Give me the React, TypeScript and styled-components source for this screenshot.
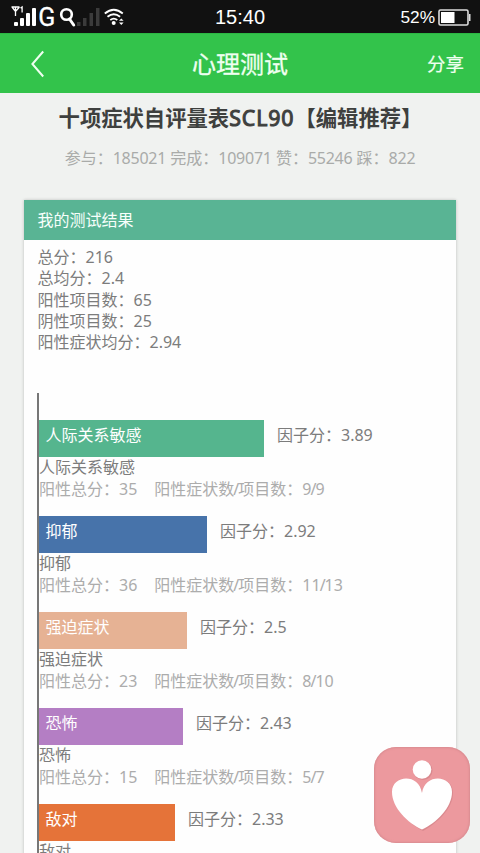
import React from "react";
import styled, { createGlobalStyle } from "styled-components";

const GlobalStyle = createGlobalStyle`
  * { box-sizing: border-box; }
  body {
    margin: 0;
    background: #f0f2f0;
    font-family: "Noto Sans", "Noto Sans CJK SC", sans-serif;
    font-size: 16px;
  }
`;

const Screen = styled.div`
  position: relative;
  display: flex;
  flex-direction: column;
  width: 480px;
  height: 853px;
  overflow: hidden;
  background: #f0f2f0;
`;

const StatusBar = styled.header`
  display: grid;
  grid-template-columns: 1fr auto 1fr;
  align-items: center;
  flex: none;
  height: 33px;
  background: #111;
  color: #fff;
`;

const Signals = styled.svg`
  display: block;
  width: 130px;
  height: 33px;
`;

const Clock = styled.time`
  padding-top: 1px;
  font: 20px/32px "Liberation Sans", Arial, sans-serif;
`;

const Power = styled.div`
  display: flex;
  align-items: center;
  justify-content: flex-end;
  gap: 3px;
  padding: 1px 9px 0 0;
  font: 17.3px/32px "Liberation Sans", Arial, sans-serif;
`;

const NavBar = styled.nav`
  display: grid;
  grid-template-columns: 1fr auto 1fr;
  align-items: center;
  flex: none;
  height: 60px;
  padding: 0 16px 0 30px;
  border-top: 1px solid #2bb743;
  background: #33c34b;
  color: #effff0;
`;

const BackButton = styled.button`
  width: 16px;
  height: 28px;
  padding: 0;
  border: 0;
  background: none;
  color: inherit;
`;

const NavTitle = styled.h1`
  margin: 0 0 0 -14px;
  font-size: 24px;
  font-weight: 400;
  line-height: 36px;
  -webkit-text-stroke: 0.3px currentColor;
`;

const ShareButton = styled.button`
  justify-self: end;
  padding: 0;
  border: 0;
  background: none;
  color: inherit;
  font: inherit;
  font-size: 18.5px;
  line-height: 28px;
  -webkit-text-stroke: 0.2px currentColor;
`;

const Intro = styled.section`
  flex: none;
  height: 107px;
  padding-top: 9px;
  text-align: center;
  white-space: nowrap;
`;

const TestTitle = styled.h2`
  margin: 0;
  padding-left: 1px;
  color: #3e403e;
  font-size: 21.33px;
  font-weight: 700;
  line-height: 32px;
`;

const Latin = styled.span`
  font-weight: 400;
  letter-spacing: 0.9px;
  -webkit-text-stroke: 1px currentColor;
`;

const Counts = styled.p`
  margin: 12px 0 0;
  color: #a9aba9;
  line-height: 24px;
`;

const Digits = styled.span`
  letter-spacing: -0.25px;
`;

const Card = styled.main`
  flex: none;
  width: 432px;
  height: 700px;
  margin: 0 24px;
  background: #fefefe;
  box-shadow: 0 0 3px rgba(0, 0, 0, 0.22);
`;

const CardHeader = styled.h3`
  height: 40px;
  margin: 0;
  padding-left: 13.5px;
  background: #59b494;
  color: #f7fffb;
  font-size: 16px;
  font-weight: 400;
  line-height: 40px;
`;

const Summary = styled.div`
  height: 153px;
  padding: 7px 13.5px;
  color: #7c7c7c;
  line-height: 21.33px;
`;

const Chart = styled.section`
  margin-left: 13px;
  padding-top: 27px;
  border-left: 2px solid #777;
`;

const Factor = styled.article`
  height: 96px;
  color: #7c7c7c;
  line-height: 21.33px;
  white-space: nowrap;
`;

const BarLine = styled.div`
  display: flex;
  gap: 13px;
  height: 37px;
  line-height: 31px;
`;

const Bar = styled.div<{ $width: number; $color: string }>`
  flex: none;
  width: ${(p) => p.$width}px;
  padding-left: 6.5px;
  background: ${(p) => p.$color};
  color: #fff;
`;

const Detail = styled.div`
  display: flex;
  gap: 17px;
  padding-top: 0.7px;
  color: #acacac;
`;

const Slash = styled.span`
  margin: 0 -1px;
`;

const FloatingButton = styled.button`
  position: absolute;
  left: 374px;
  top: 747px;
  width: 96px;
  height: 96px;
  padding: 0;
  border: 0;
  border-radius: 22px;
  background: #ec999e;
  box-shadow: inset 0 0 2px 1px #d98c91;
`;

interface FactorData {
  name: string;
  score: string;
  width: number;
  color: string;
  detail?: { total: number; positive: number; items: number };
}

const factors: FactorData[] = [
  { name: "人际关系敏感", score: "3.89", width: 225, color: "#55b58e", detail: { total: 35, positive: 9, items: 9 } },
  { name: "抑郁", score: "2.92", width: 168, color: "#4773aa", detail: { total: 36, positive: 11, items: 13 } },
  { name: "强迫症状", score: "2.5", width: 148, color: "#e6b294", detail: { total: 23, positive: 8, items: 10 } },
  { name: "恐怖", score: "2.43", width: 144, color: "#b47ec4", detail: { total: 15, positive: 5, items: 7 } },
  { name: "敌对", score: "2.33", width: 136, color: "#e57339" },
];

const summary = [
  "总分：216",
  "总均分：2.4",
  "阳性项目数：65",
  "阴性项目数：25",
  "阳性症状均分：2.94",
];

function SignalIcons() {
  return (
    <Signals viewBox="0 0 130 33" fill="none" stroke="#fff">
      <path d="M11.5 7h8M12 7l3.5 4.5L19.5 7M15.5 7v9M20.5 8l1.6-1v5.5" strokeWidth="1.3" />
      <g fill="#fff" stroke="none">
        <rect x="14" y="22" width="4" height="4" rx="1" />
        <rect x="20" y="18" width="4" height="8" rx="1" />
        <rect x="26" y="13" width="4" height="13" rx="1" />
        <rect x="32" y="8" width="4" height="18" rx="1" />
      </g>
      <text x="38.2" y="25.8" fill="#fff" strokeWidth="0.3" fontFamily="Roboto, sans-serif" fontSize="25">G</text>
      <circle cx="66.5" cy="14.5" r="5.3" strokeWidth="2.6" />
      <path d="M69.5 19l4.2 6" strokeWidth="3" strokeLinecap="round" />
      <g fill="#3b3b3b" stroke="none">
        <rect x="77" y="22" width="3.5" height="4" />
        <rect x="83" y="18" width="3.5" height="8" />
        <rect x="89.5" y="13" width="3.5" height="13" />
        <rect x="96" y="8" width="3.5" height="18" />
      </g>
      <path d="M104.8 13.5q9-7.5 18 0M107.5 16.8q6.3-5 12.6 0M110.3 20q3.5-2.7 7 0" strokeWidth="1.8" />
      <circle cx="113.7" cy="23" r="2" fill="#fff" stroke="none" />
      <path d="M119 20.8l2.3-2.4 2.3 2.4zM119 22.6l2.3 2.4 2.3-2.4z" fill="#fff" stroke="none" />
    </Signals>
  );
}

export default function App() {
  return (
    <Screen>
      <GlobalStyle />
      <StatusBar>
        <SignalIcons />
        <Clock>15:40</Clock>
        <Power>
          52%
          <svg width="33" height="17" viewBox="0 0 33 17">
            <rect x="1" y="1" width="29" height="15" rx="1.5" fill="none" stroke="#ddd" strokeWidth="1.6" />
            <rect x="3" y="3" width="13.5" height="11" fill="#fff" />
            <rect x="31" y="5" width="1.5" height="7" fill="#ddd" />
          </svg>
        </Power>
      </StatusBar>
      <NavBar>
        <BackButton aria-label="返回">
          <svg width="16" height="28" viewBox="0 0 16 28" fill="none" stroke="currentColor" strokeWidth="2">
            <path d="M13.2 1.5L2.4 14l10.8 12.5" />
          </svg>
        </BackButton>
        <NavTitle>心理测试</NavTitle>
        <ShareButton>分享</ShareButton>
      </NavBar>
      <Intro>
        <TestTitle>
          十项症状自评量表<Latin>SCL90</Latin>【编辑推荐】
        </TestTitle>
        <Counts>
          参与：<Digits>185021</Digits> 完成：<Digits>109071</Digits> 赞：<Digits>55246</Digits> 踩：<Digits>822</Digits>
        </Counts>
      </Intro>
      <Card>
        <CardHeader>我的测试结果</CardHeader>
        <Summary>
          {summary.map((line) => (
            <div key={line}>{line}</div>
          ))}
        </Summary>
        <Chart>
          {factors.map((f) => (
            <Factor key={f.name}>
              <BarLine>
                <Bar $width={f.width} $color={f.color}>{f.name}</Bar>
                <span>因子分：{f.score}</span>
              </BarLine>
              <div>{f.name}</div>
              {f.detail && (
                <Detail>
                  <span>阳性总分：{f.detail.total}</span>
                  <span>
                    阳性症状数<Slash>/</Slash>项目数：{f.detail.positive}<Slash>/</Slash>{f.detail.items}
                  </span>
                </Detail>
              )}
            </Factor>
          ))}
        </Chart>
      </Card>
      <FloatingButton aria-label="心理">
        <svg width="96" height="96" viewBox="0 0 96 96">
          <g fill="#c97a80" opacity="0.5" transform="translate(1 1)">
            <circle cx="48" cy="22.5" r="9.5" />
            <path d="M48 46C44 27 18 27 18 45C18 61 34 75 48 83C62 75 78 61 78 45C78 27 52 27 48 46Z" />
          </g>
          <g fill="#fff">
            <circle cx="48" cy="22.5" r="9.3" />
            <path d="M48 46C45 26 18 28 18 45C18 61 34 76 48 82.5C62 76 78 61 78 45C78 28 51 26 48 46Z" />
          </g>
        </svg>
      </FloatingButton>
    </Screen>
  );
}
